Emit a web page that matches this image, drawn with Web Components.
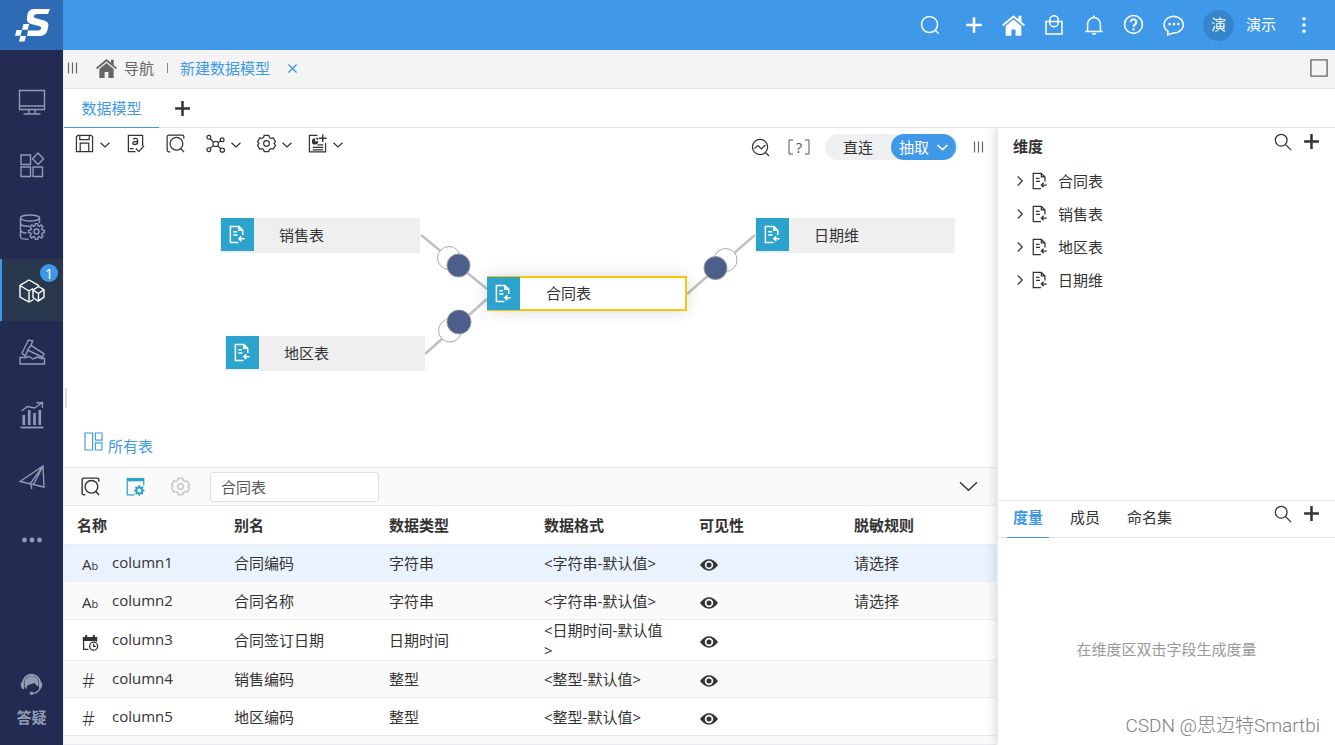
<!DOCTYPE html>
<html lang="zh-CN">
<head>
<meta charset="utf-8">
<title>数据模型</title>
<style>
html, body { height: 100%; margin: 0; }
body { font: 15px/20px "Open Sans", "Noto Sans CJK SC", sans-serif; color: #333; background: #fff; }
</style>
</head>
<body>
<bi-app></bi-app>
<script>
const BASE = `
*, *::before, *::after { box-sizing: border-box; }
button { font: inherit; color: inherit; background: none; border: 0; padding: 0; margin: 0; display: inline-flex; align-items: center; justify-content: center; cursor: pointer; }
a { color: inherit; text-decoration: none; }
ul { list-style: none; margin: 0; padding: 0; }
h2 { margin: 0; }
`;
function define(tag, css, html, setup) {
  const template = document.createElement('template');
  template.innerHTML = `<style>${BASE}${css}</style>${html}`;
  customElements.define(tag, class extends HTMLElement {
    constructor() {
      super();
      this.attachShadow({ mode: 'open' }).append(template.content.cloneNode(true));
    }
    connectedCallback() { if (setup) setup(this, this.shadowRoot); }
  });
}

function gearPath(cx, cy, outer, inner, teeth) {
  const pts = [];
  const step = Math.PI * 2 / teeth;
  for (let i = 0; i < teeth; i++) {
    const a = i * step - Math.PI / 2;
    [[-0.34, inner], [-0.2, outer], [0.2, outer], [0.34, inner]].forEach(([o, r]) =>
      pts.push((cx + r * Math.cos(a + o * step)).toFixed(2) + ' ' + (cy + r * Math.sin(a + o * step)).toFixed(2)));
  }
  return 'M' + pts.join('L') + 'Z';
}

const COG = '<path d="M7.600 1.500h4.800l.8 2.300 1.500.9 2.500-.5 2.200 4-1.500 1.800 1.500 1.800-2.200 4-2.500-.5-1.500.9-.8 2.300H7.600l-.8-2.300-1.500-.9-2.500.5-2.200-4L2.100 10 .6 8.200l2.200-4 2.500.5 1.500-.9z"/><circle cx="10" cy="10" r="3"/>';
const ICONS = {
  search: '<circle cx="9.500" cy="9.500" r="8"/><path d="M15.300 15.300l3.500 3.500"/>',
  find: '<circle cx="8" cy="8" r="6.500"/><path d="M12.600 12.600l6.400 6.400"/>',
  plus: '<path d="M10 2.200v15.600M2.200 10h15.600" stroke-width="2.600"/>',
  home: '<path fill="currentColor" stroke="none" d="M10 1L0 9.400l1.100 1.300L10 3.300l8.900 7.400L20 9.400l-3.100-2.600V1.600h-2.600v3zM10 4.800l-6.800 5.700V19h5v-5.600h3.600V19h5v-8.500z"/>',
  bag: '<path d="M2 6.500h16v12.500H2zM5.800 6.500V5a4.200 4.200 0 0 1 8.400 0v1.500M5.800 6.500v1.200a4.200 4 0 0 0 8.400 0V6.500"/>',
  bell: '<path d="M10 .6v2M3.600 16.500V9a6.400 6.400 0 0 1 12.800 0v7.500M1.400 16.600h17.200M8 18.800h4"/>',
  help: '<circle cx="10" cy="9" r="8.500"/><path d="M7.300 6.800a2.700 2.700 0 1 1 4.200 2.200c-.9.600-1.500 1-1.500 2.300" stroke-width="1.900"/><path d="M10 12.600v2" stroke-width="2"/>',
  chat: '<path d="M4.600 15.800A8.700 7.500 0 1 1 9 17.200L4.200 19z"/><g fill="currentColor" stroke="none"><circle cx="6" cy="9.200" r="1.200"/><circle cx="10" cy="9.200" r="1.200"/><circle cx="14" cy="9.200" r="1.200"/></g>',
  more: '<g fill="currentColor" stroke="none"><circle cx="10" cy="3" r="2"/><circle cx="10" cy="10" r="2"/><circle cx="10" cy="17" r="2"/></g>',
  dots: '<g fill="currentColor" stroke="none"><circle cx="2.500" cy="10" r="2.400"/><circle cx="10" cy="10" r="2.400"/><circle cx="17.500" cy="10" r="2.400"/></g>',
  grip: '<path d="M4.500 4.500v11M8.500 4.500v11M12.500 4.500v11" stroke-width="1.200"/>',
  down: '<path d="M1 5.500l9 8.500 9-8.500"/>',
  right: '<path d="M5.500 1l9 9-9 9"/>',
  close: '<path d="M1 1l18 18M19 1L1 19"/>',
  square: '<path d="M1 1h18v18H1z"/>',
  save: '<path d="M3 1.500h14l1.500 1.500v15.500h-17V3zM5 1.500v4.500h10V1.500M5.500 18.500V9.500h9v9"/>',
  check: '<path d="M10 18.500H2.500v-17h15v11M4 15.500h4M10.500 15.300l3 3.200 5.500-6"/><path d="M7.500 5.400c1.600-1.300 4.600-1.200 4.600 1v4.500M12.100 7.800c-2 0-4.900.2-4.900 1.900 0 1.900 3.600 1.900 4.900-.4" stroke-width="1.400"/>',
  preview: '<path d="M4.500 18.700H3a1.800 1.800 0 0 1-1.800-1.800V3A1.800 1.800 0 0 1 3 1.200h14A1.800 1.800 0 0 1 18.800 3v2"/><circle cx="11" cy="10.300" r="6.700"/><path d="M15.700 15.300l3.300 3.700"/>',
  nodes: '<circle cx="3" cy="3.500" r="2"/><circle cx="3" cy="16.500" r="2"/><circle cx="17" cy="6" r="2"/><circle cx="17.200" cy="17" r="2.200"/><rect x="7.500" y="8" width="5.500" height="5" rx="1.500"/><path d="M4.500 5l3.200 3.500M7.500 12.500L4.500 15M13 9l2.500-1.500M12.500 12.800l3 2.500"/>',
  gear: COG,
  report: '<path d="M10 1.500H1.500v17.200h17V9.500"/><path d="M15.500.500v8M11.500 4.500h8" stroke-width="1.500"/><path fill="currentColor" stroke="none" d="M7.500 4.500v3.200h3.200A3.300 3.300 0 1 1 7.500 4.500zM8.800 3.400a3.200 3.200 0 0 1 2.400 2.600H8.800z"/><path d="M10 11.500h6M5 14.200h11M5 16.600h11" stroke-width="1.300"/>',
  wave: '<circle cx="9.500" cy="9.500" r="8"/><path d="M15.300 15.300l3.700 3.700M3.500 11.200L7.300 8l3.700 3.400 4.200-4"/>',
  table: '<path d="M11 18.500H2.500v-17h9l4 4V10.500M11.500 1.500v4h4M5.500 7h4M5.500 10.500h4.500M17.500 14.500h-6M14 12l-2.500 2.500L14 17"/>',
  layout: '<path d="M1 1h8v18H1zM12 1h7v7.500h-7zM12 11.500h7V19h-7z"/>',
  panel: `<path d="M9 18.700H1.300V2h17.400v7"/><path d="M1 1h18v3.500H1z" fill="currentColor" stroke="none"/><path d="${gearPath(14, 14.200, 5.600, 4.200, 8)}" fill="currentColor" stroke="none"/><circle cx="14" cy="14.200" r="2" fill="#fafafa" stroke="none"/>`,
  eye: '<path fill="currentColor" stroke="none" fill-rule="evenodd" d="M0 10Q4.500 3.700 10 3.700T20 10q-4.500 6.300-10 6.300T0 10zm10-4.700a4.700 4.700 0 1 0 0 9.400 4.700 4.700 0 0 0 0-9.400z"/><circle cx="10" cy="10" r="2.800" fill="currentColor" stroke="none"/>',
  date: '<path d="M8 18H2V3.500h16v5"/><path d="M1 2.500h18v5H1zM4 0h2.500v3H4zM13.500 0H16v3h-2.500z" fill="currentColor" stroke="none"/><circle cx="14.500" cy="14" r="5"/><path d="M14.500 11v3.200h2.700"/>',
  screen: '<path d="M.5 1.500h25v19H.5zM.5 17h25M10 20.500v4M16 20.500v4M4.500 25h17"/>',
  apps: '<path d="M2 3h9.500v9.500H2zM2 15h9.500v9.500H2zM14 15h9.500v9.500H14zM19 1l5.500 5.700-5.500 5.700-5.500-5.700z"/>',
  database: `<ellipse cx="11" cy="4" rx="9.500" ry="3"/><path d="M1.500 4v19c0 1.500 4 2.300 8 2.300M20.500 4v5M1.500 10c1.500 2 5 2.300 9 2.300M1.500 16.500c1.500 2 4 2.500 6 2.500"/><path d="${gearPath(17.500, 17.500, 8, 5.900, 8)}"/><circle cx="17.500" cy="17.500" r="2.500"/>`,
  cubes: '<path d="M14.500 22.500L10 25l-9-5V8.500l9-5.500 9.500 5.500v1M1 8.500l9 5.500 4-2.500M10 14v11M19.500 9.500l5.500 3.200v7.500l-5.800 4-5.200-3.700v-7.300zM14 13.200l5.500 3.300 5.500-3.800M19.500 16.500v7.700"/>',
  hammer: '<path d="M11.800 6.300L13.800 2 9.500 1 3 14l3.200 3 2.500-5.300M12 6.300L25 14.800l-1.500 3.400L8.500 11zM10 9.500L12 6.300M1 18.500h5.500l3.500-1 4 2.500 4.500-2 3.500 1.500h3.500V25H1z"/>',
  chart: '<path d="M1.500 25.500h23" stroke-width="1.800"/><path d="M4.800 13v10M10.200 8v15M15.500 11v12M20.800 8v15" stroke-width="2.600"/><path d="M2.500 9l6-4.500 7 1.500 8-5.500M17.500.700h6v5"/>',
  plane: '<path d="M1 17.500L24 2l1 21zM24 2L11.500 19.300M11.500 19.300L12.800 25M14.500 20.500L24 2"/>',
  headset: '<path d="M3.500 12.500a9.500 9.500 0 0 1 19 0" stroke-width="2.200"/><path fill="currentColor" stroke="none" d="M1 11.500h3.500v8C2.500 19.500 1 18 1 15.500zM21.500 11.500H25v4c0 2.500-1.500 4-3.500 4zM5 12.500a8 8 0 0 1 16 0v4q-3-.5-4.500-4Q13 13.500 9 15q-2 1.500-2 5Q4.500 17 5 12.500z"/><path d="M22.500 19q-2.500 5-9 5.300" stroke-width="1.500"/><circle cx="13" cy="24" r="1.900" fill="currentColor" stroke="none"/>'
};
const RAIL = ['screen', 'apps', 'database', 'cubes', 'hammer', 'chart', 'plane', 'headset'];

define('bi-icon', `
:host { display: inline-flex; flex: none; }
svg { display: block; overflow: visible; fill: none; stroke: currentColor; }`, '', (el, root) => {
  if (root.querySelector('svg')) return;
  const name = el.getAttribute('name');
  const size = el.getAttribute('size') || 20;
  const box = RAIL.includes(name) ? 26 : 20;
  const holder = document.createElement('template');
  holder.innerHTML = `<svg aria-hidden="true" width="${size}" height="${size}" viewBox="0 0 ${box} ${box}" stroke-width="${el.getAttribute('stroke') || 1.3}">${ICONS[name]}</svg>`;
  root.append(holder.content);
});

define('bi-header', `
:host { display: flex; height: 50px; background: #4099e8; color: #fff; }
.logo { width: 63px; background: #2d6bb5; display: flex; align-items: center; justify-content: center; }
nav { margin-left: auto; display: flex; align-items: center; padding-right: 11px; }
nav button { width: 40px; height: 40px; }
.search { margin-right: 4px; }
.avatar, .user { padding-bottom: 2px; }
.avatar { width: 31px; height: 31px; border-radius: 50%; background: #3585cb; margin: 0 12px 0 9px; display: flex; align-items: center; justify-content: center; }
.user { margin-right: 8px; }`, `
<a class="logo" href="#" aria-label="首页"><svg width="36" height="34" viewBox="0 0 36 34" fill="#fff"><path d="M36 1H20q-5 0-6.500 5L13 9q-1 5.500 4 7l8 2q3 1 2 3t-4 1.500H14L13 28h12q7 0 8.500-6l.8-4q.7-4-4-5.500L21 10q-2-1-1-2.500T23 6h11z"/><path d="M9.500 16h5.700l-1.600 5.800H8zM2.500 22H8l-1.500 5.700H1zM6.400 28H12l-1.500 5.500H5z"/></svg></a>
<nav>
<button class="search" aria-label="搜索"><bi-icon name="search" stroke="1.500"></bi-icon></button>
<button aria-label="新建"><bi-icon name="plus"></bi-icon></button>
<button aria-label="主页"><bi-icon name="home" size="23"></bi-icon></button>
<button aria-label="资源"><bi-icon name="bag" stroke="1.500"></bi-icon></button>
<button aria-label="通知"><bi-icon name="bell" stroke="1.500"></bi-icon></button>
<button aria-label="帮助"><bi-icon name="help" size="21" stroke="1.500"></bi-icon></button>
<button aria-label="消息"><bi-icon name="chat" size="22" stroke="1.400"></bi-icon></button>
<span class="avatar">演</span><span class="user">演示</span>
<button aria-label="更多"><bi-icon name="more" size="18"></bi-icon></button>
</nav>`);

define('bi-rail-item', `
:host { display: flex; flex: 1; }
button { flex: 1; color: #929bb4; border-left: 2px solid transparent; padding-right: 1px; position: relative; }
:host([active]) button { background: #2a384e; color: #fff; border-color: #4099e8; }
.badge { position: absolute; right: 5px; top: 5px; width: 18px; height: 18px; line-height: 18px; border-radius: 50%; background: #4099e8; color: #fff; }
.badge:empty { display: none; }`, `<button><bi-icon></bi-icon><span class="badge"></span></button>`, (el, root) => {
  const old = root.querySelector('bi-icon');
  const icon = document.createElement('bi-icon');
  icon.setAttribute('name', el.getAttribute('icon'));
  icon.setAttribute('size', el.getAttribute('icon') === 'dots' ? 20 : 26);
  icon.setAttribute('stroke', 1.4);
  old.replaceWith(icon);
  root.querySelector('button').setAttribute('aria-label', el.getAttribute('label'));
  root.querySelector('.badge').textContent = el.getAttribute('badge') || '';
});

define('bi-rail', `
:host { display: flex; flex-direction: column; justify-content: space-between; width: 63px; background: #242b52; padding: 21px 0 18px; flex: none; }
nav { display: flex; flex-direction: column; height: 500px; }
.help { flex-direction: column; gap: 12px; color: #929bb4; font-weight: 700; }`, `
<nav>
<bi-rail-item icon="screen" label="桌面"></bi-rail-item>
<bi-rail-item icon="apps" label="应用"></bi-rail-item>
<bi-rail-item icon="database" label="数据连接"></bi-rail-item>
<bi-rail-item icon="cubes" label="数据准备" badge="1" active></bi-rail-item>
<bi-rail-item icon="hammer" label="数据加工"></bi-rail-item>
<bi-rail-item icon="chart" label="分析"></bi-rail-item>
<bi-rail-item icon="plane" label="发布"></bi-rail-item>
<bi-rail-item icon="dots" label="更多"></bi-rail-item>
</nav>
<button class="help"><bi-icon name="headset" size="23"></bi-icon><span>答疑</span></button>`);

define('bi-page-tabs', `
:host { display: flex; align-items: center; height: 39px; background: #f4f4f4; border-bottom: 1px solid #e4e4e6; padding: 0 7px 2px 0; color: #666; }
.grip { width: 20px; }
.home { margin-left: 12px; gap: 7px; display: flex; align-items: center; }
.line { width: 1px; height: 10px; background: #888; margin: 0 12px 0 13px; }
.current { color: #4099e8; }
.close { color: #4099e8; margin-left: 18px; }
.full { margin-left: auto; }`, `
<button class="grip" aria-label="折叠"><bi-icon name="grip"></bi-icon></button>
<a class="home" href="#"><bi-icon name="home" size="21"></bi-icon>导航</a>
<i class="line"></i>
<a class="current" href="#">新建数据模型</a>
<button class="close" aria-label="关闭"><bi-icon name="close" size="9" stroke="3"></bi-icon></button>
<button class="full" aria-label="全屏"><bi-icon name="square" size="18" stroke="1.500"></bi-icon></button>`);

define('bi-model-tabs', `
:host { display: flex; height: 39px; border-bottom: 1px solid #e4e4e6; }
a { width: 95px; height: 39px; line-height: 39px; text-align: center; color: #4099e8; border-bottom: 1px solid #4099e8; }
button { width: 46px; }`, `
<a href="#">数据模型</a><button aria-label="新建页签"><bi-icon name="plus" size="19" stroke="1.300"></bi-icon></button>`);

define('bi-tool', `
:host { display: inline-flex; padding-right: 5px; }
:host([menu]) { padding-right: 0; }
button { gap: 6px; height: 18px; }
.arrow { display: none; padding-top: 4px; }
:host([menu]) .arrow { display: inline-flex; }`, `<button><slot></slot><bi-icon class="arrow" name="down" size="10" stroke="2.400"></bi-icon></button>`, (el, root) => {
  root.querySelector('button').setAttribute('aria-label', el.getAttribute('label'));
});

define('bi-model-toolbar', `
:host { display: flex; align-items: flex-start; padding: 6px 12px 6px 11px; }
.left { display: flex; gap: 16px; }
.right { display: flex; align-items: center; margin-left: auto; height: 26px; }
.formula { margin: 0 15px 0 18px; width: 22px; color: #555; justify-content: space-between; }
.formula svg { fill: none; stroke: #555; }
.mode { display: flex; border-radius: 13px; background: #eff0f1; padding-right: 2px; margin-right: 12px; }
.mode button { height: 26px; width: 66px; }
.mode .on { background: #4099e8; color: #fff; border-radius: 13px; gap: 8px; width: 65px; }
.grip { width: 20px; color: #666; margin-right: -6px; }`, `
<div class="left">
<bi-tool menu label="保存"><bi-icon name="save" size="19"></bi-icon></bi-tool>
<bi-tool label="校验"><bi-icon name="check" size="19"></bi-icon></bi-tool>
<bi-tool label="预览"><bi-icon name="preview" size="19"></bi-icon></bi-tool>
<bi-tool menu label="关系"><bi-icon name="nodes" size="19"></bi-icon></bi-tool>
<bi-tool menu label="设置"><bi-icon name="gear" size="19"></bi-icon></bi-tool>
<bi-tool menu label="新建报表"><bi-icon name="report" size="19"></bi-icon></bi-tool>
</div>
<div class="right">
<button aria-label="血缘分析"><bi-icon name="wave" size="19"></bi-icon></button>
<button class="formula"><svg width="5" height="16"><path d="M5 1H1v14h4"/></svg><span>?</span><svg width="5" height="16"><path d="M0 1h4v14H0"/></svg></button>
<div class="mode"><button>直连</button><button class="on">抽取<bi-icon name="down" size="11" stroke="3"></bi-icon></button></div>
<button class="grip" aria-label="折叠"><bi-icon name="grip"></bi-icon></button>
</div>`);

define('bi-node', `
:host { position: absolute; left: var(--x); top: var(--y); display: flex; align-items: center; width: 200px; height: 35px; padding-bottom: 2px; box-sizing: border-box; background: #efefef; }
.icon { width: 33px; height: 33px; margin: 0 25px 0 1px; background: #2ba3cd; color: #fff; display: flex; align-items: center; justify-content: center; }
:host([selected]) { background: #fff; outline: 2px solid #f5c60c; outline-offset: -2px; box-shadow: 0 0 16px rgba(0,0,0,.15); }
:host([selected]) .icon { margin: 2px 26px 0 0; position: relative; }`, `<span class="icon"><bi-icon name="table" size="19" stroke="1.600"></bi-icon></span><slot></slot>`);

define('bi-diagram', `
:host { display: block; flex: 1; min-height: 250px; position: relative; overflow: hidden; }
svg { position: absolute; left: 0; top: 0; width: 100%; height: 100%; }
.link { stroke: #c1c1c1; stroke-width: 2.500; }
.from { fill: #fff; stroke: #aaa; }
.to { fill: #4c5f8b; stroke: #999; }`, `
<svg aria-hidden="true">
<path class="link" d="M357 69L423 123M361 188L423 133M623 128L691 69"/>
<circle class="from" cx="385" cy="92" r="11.500"/><circle class="to" cx="394.500" cy="99.500" r="11.500"/>
<circle class="from" cx="386" cy="164.500" r="11.500"/><circle class="to" cx="395" cy="156" r="12"/>
<circle class="from" cx="661.500" cy="94" r="11.500"/><circle class="to" cx="651.500" cy="102" r="11.500"/>
</svg>
<bi-node style="--x:156px;--y:52px">销售表</bi-node>
<bi-node style="--x:161px;--y:170px">地区表</bi-node>
<bi-node style="--x:691px;--y:52px">日期维</bi-node>
<bi-node style="--x:423px;--y:110px" selected>合同表</bi-node>`);

define('bi-field-bar', `
:host { display: flex; align-items: center; height: 39px; background: #fafafa; border: 1px solid #e8e8ec; border-width: 1px 0; padding: 0 18px 0 17px; }
.tools { display: flex; gap: 26px; margin-right: 20px; }
.panel { color: #2ba3cd; }
.off { color: #ccc; }
input { font: inherit; color: #555; width: 169px; height: 30px; padding: 0 10px; border: 1px solid #dcdfe6; border-radius: 3px; background: #fff; }
.fold { margin-left: auto; }`, `
<div class="tools">
<button aria-label="预览数据"><bi-icon name="preview" size="19" stroke="1.500"></bi-icon></button>
<button class="panel" aria-label="表设置"><bi-icon name="panel" size="19"></bi-icon></button>
<button class="off" aria-label="设置" disabled><bi-icon name="gear" size="19" stroke="1.800"></bi-icon></button>
</div>
<input aria-label="表名" value="合同表">
<button class="fold" aria-label="收起"><bi-icon name="down" size="19" stroke="1.500"></bi-icon></button>`);

const FIELDS = [
  ['text', 'column1', '合同编码', '字符串', '<字符串-默认值>', '请选择'],
  ['text', 'column2', '合同名称', '字符串', '<字符串-默认值>', '请选择'],
  ['date', 'column3', '合同签订日期', '日期时间', '<日期时间-默认值>', ''],
  ['num', 'column4', '销售编码', '整型', '<整型-默认值>', ''],
  ['num', 'column5', '地区编码', '整型', '<整型-默认值>', '']
];
const TYPE = {
  text: '<span>A<small>b</small></span>',
  date: '<bi-icon name="date" size="16" stroke="1.600"></bi-icon>',
  num: '<span class="hash">#</span>'
};
const esc = s => s.replace('<', '&lt;').replace('>', '&gt;');
define('bi-field-table', `
:host { display: block; }
table { width: 100%; table-layout: fixed; border-collapse: separate; border-spacing: 0; }
th, td { text-align: left; padding: 0 16px 0 13px; height: 37px; border-bottom: 1px solid #e9ebf2; font-weight: 400; vertical-align: middle; }
th { height: 39px; font-weight: 600; }
th:first-child { width: 157px; }
tbody tr:nth-child(even) { background: #fafafa; }
tbody tr:first-child { background: #eaf3fd; }
tbody tr:nth-child(2) td, tbody tr:nth-child(5) td { height: 38px; }
tbody tr.rest td { height: 9px; }
.name { display: flex; align-items: center; }
.name span:last-child { padding-bottom: 2px; }
.type { width: 35px; padding: 6px 0 0 5px; flex: none; line-height: 18px; display: flex; }
.type small { font-size: 11px; }
.hash { font-size: 20px; font-weight: 300; }
bi-icon[name=eye] { display: flex; padding: 4px 0 0 1px; }`, `
<table>
<thead><tr><th>名称</th><th>别名</th><th>数据类型</th><th>数据格式</th><th>可见性</th><th>脱敏规则</th></tr></thead>
<tbody>${FIELDS.map(f => `<tr><td><div class="name"><span class="type">${TYPE[f[0]]}</span><span>${f[1]}</span></div></td><td>${f[2]}</td><td>${f[3]}</td><td>${esc(f[4])}</td><td><bi-icon name="eye" size="18"></bi-icon></td><td>${f[5]}</td></tr>`).join('')}
<tr class="rest"><td></td><td></td><td></td><td></td><td></td><td></td></tr></tbody>
</table>`);

define('bi-workspace', `
:host { display: flex; flex-direction: column; flex: 1; min-width: 0; padding-right: 2px; position: relative; }
.all { display: flex; gap: 5px; color: #4099e8; padding: 0 20px 10px; height: 35px; }
.all span { padding-top: 4px; }
.handle { position: absolute; left: 1px; top: 260px; width: 2px; height: 20px; background: #ddd; }`, `
<bi-model-toolbar></bi-model-toolbar>
<bi-diagram></bi-diagram>
<a class="all" href="#"><bi-icon name="layout" size="19" stroke="1.200"></bi-icon><span>所有表</span></a>
<bi-field-bar></bi-field-bar>
<bi-field-table></bi-field-table>
<i class="handle"></i>`);

define('bi-actions', `
:host { display: flex; gap: 10px; margin-left: auto; }`, `
<button aria-label="搜索"><bi-icon name="find" size="18" stroke="1.400"></bi-icon></button>
<button aria-label="新建"><bi-icon name="plus" size="19"></bi-icon></button>`);

define('bi-tree-row', `
:host { display: flex; align-items: center; height: 33px; }
button { width: 8px; margin-right: 7px; }
bi-icon[name=table] { margin-right: 9px; }`, `<button aria-label="展开"><bi-icon name="right" size="10" stroke="2.400"></bi-icon></button><bi-icon name="table" size="18" stroke="1.400"></bi-icon><slot></slot>`);

define('bi-side-panel', `
:host { display: flex; flex-direction: column; width: 337px; flex: none; background: #fff; box-shadow: -1px 0 10px 1px rgba(0,0,0,.16); position: relative; }
.dims { flex: 38; }
.head { display: flex; align-items: flex-start; padding: 4px 14px 0 15px; height: 36px; }
.head h2 { font-size: 15px; line-height: 28px; font-weight: 600; }
.dims ul { padding-left: 18px; }
.measures { flex: 25; display: flex; flex-direction: column; border-top: 1px solid #e8e8ec; }
.tabs { display: flex; gap: 15px; border-bottom: 1px solid #e4e4e6; padding: 0 14px 0 9px; height: 37px; flex: none; }
.tabs a { height: 37px; line-height: 33px; padding: 0 6px; }
.tabs .on { color: #4099e8; border-bottom: 1px solid #4099e8; font-weight: 600; }
bi-actions { padding-bottom: 10px; }
.empty { flex: 1; display: flex; align-items: center; justify-content: center; padding-top: 16px; color: #999; }`, `
<section class="dims">
<div class="head"><h2>维度</h2><bi-actions></bi-actions></div>
<ul><li><bi-tree-row>合同表</bi-tree-row></li><li><bi-tree-row>销售表</bi-tree-row></li><li><bi-tree-row>地区表</bi-tree-row></li><li><bi-tree-row>日期维</bi-tree-row></li></ul>
</section>
<section class="measures">
<div class="tabs"><a class="on" href="#">度量</a><a href="#">成员</a><a href="#">命名集</a><bi-actions></bi-actions></div>
<div class="empty">在维度区双击字段生成度量</div>
</section>`);

define('bi-app', `
:host { display: flex; flex-direction: column; min-height: 100vh; position: relative; overflow: hidden; }
.body { display: flex; flex: 1; }
main { flex: 1; min-width: 0; display: flex; flex-direction: column; border-left: 1px solid #eceef3; }
.split { display: flex; flex: 1; overflow: hidden; }
.mark { position: absolute; right: 15px; bottom: 6px; font: 19px/26px Roboto, "Noto Sans CJK SC", sans-serif; font-weight: 300; color: #808080; }`, `
<bi-header></bi-header>
<div class="body">
<bi-rail></bi-rail>
<main>
<bi-page-tabs></bi-page-tabs>
<bi-model-tabs></bi-model-tabs>
<div class="split"><bi-workspace></bi-workspace><bi-side-panel></bi-side-panel></div>
</main>
</div>
<span class="mark">CSDN @思迈特Smartbi</span>`);
</script>
</body>
</html>
